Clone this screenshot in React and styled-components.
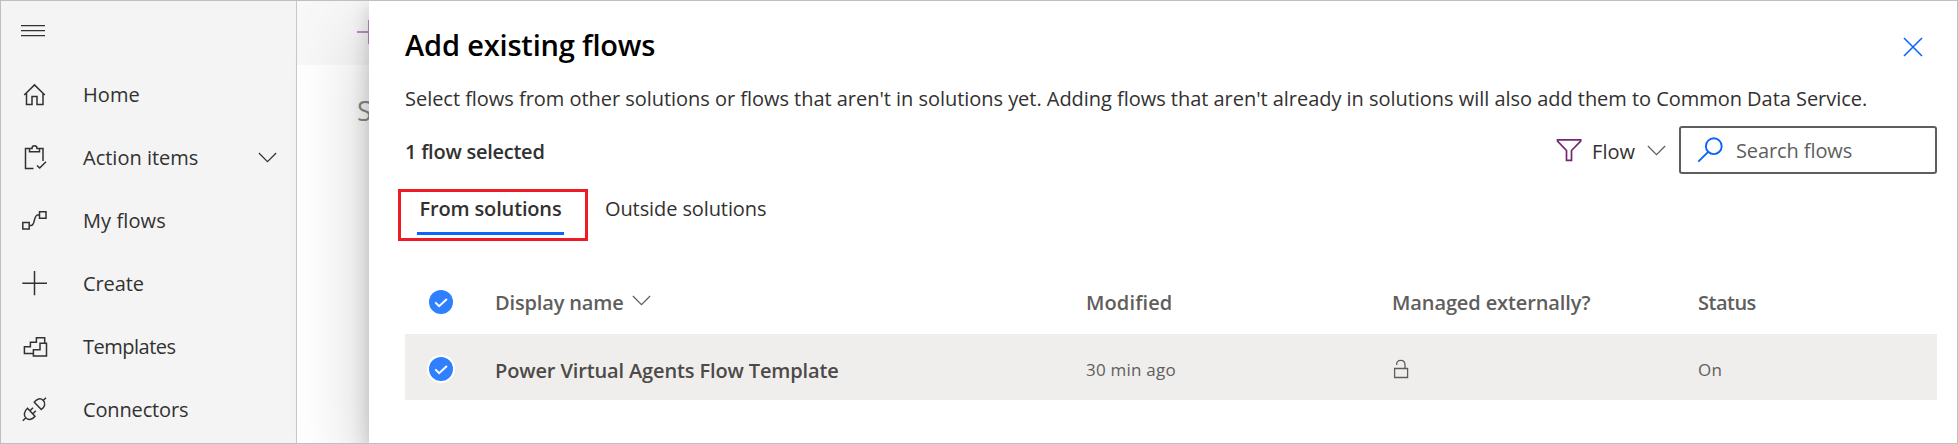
import React from 'react';
import styled, { createGlobalStyle, css } from 'styled-components';

const GlobalStyle = createGlobalStyle`
  * { box-sizing: border-box; }
  body {
    margin: 0;
    font: 400 20px/28px 'Open Sans', 'Noto Sans', sans-serif;
    color: #323130;
    background: #fff;
  }
  button, input { font: inherit; color: inherit; border: 0; background: none; padding: 0; }
`;

const Frame = styled.div`
  display: flex;
  width: 1958px;
  height: 444px;
  border: 1px solid #bfbfbf;
  overflow: hidden;
`;

/* Navigation */
const Nav = styled.nav`
  flex: none;
  width: 296px;
  border-right: 1px solid #c8c8c8;
  background: #f4f4f4;
`;
const MenuButton = styled.button`
  display: flex;
  align-items: center;
  width: 100%;
  height: 62px;
  padding: 0 0 2px 20px;
`;
const NavItem = styled.a`
  display: flex;
  align-items: center;
  height: 63px;
  padding: 0 19px 0 20px;
`;
const NavLabel = styled.span`
  flex: 1;
  margin-left: 35px;
  letter-spacing: ${(p) => p.$track || 0}px;
`;

/* Page behind the panel */
const Backdrop = styled.div`
  flex: none;
  width: 72px;
  overflow: hidden;
  background: #fff;
`;
const CommandBar = styled.div`
  height: 64px;
  padding: 19px 0 0 60px;
  background: #f8f8f8;
`;
const PageTitle = styled.div`
  padding: 27px 0 0 60px;
  font-size: 27px;
  line-height: 38px;
  color: #8a8a8a;
  white-space: nowrap;
`;

/* Panel */
const Panel = styled.section`
  position: relative;
  flex: 1;
  padding: 19px 20px 0 36px;
  background: #fff;
  box-shadow: 0 32px 72px rgba(0, 0, 0, 0.22), 0 6px 18px rgba(0, 0, 0, 0.18);
`;
const PanelHeader = styled.header`
  display: flex;
  align-items: center;
  justify-content: space-between;
  height: 51px;
  padding-right: 14px;
`;
const Title = styled.h1`
  margin: 0 0 2px;
  font-size: 29px;
  font-weight: 600;
  line-height: 40px;
  letter-spacing: -0.17px;
  color: #000;
`;
const CloseButton = styled.button`
  display: flex;
  padding-top: 3px;
`;
const Description = styled.p`
  margin: 14px 0 13px;
  letter-spacing: -0.035px;
  white-space: nowrap;
`;
const Toolbar = styled.div`
  display: flex;
  align-items: center;
  height: 48px;
`;
const Selected = styled.div`
  flex: 1;
  padding-top: 3px;
  font-weight: 600;
  letter-spacing: -0.25px;
`;
const FilterButton = styled.button`
  display: flex;
  align-items: center;
  margin-right: 13px;
`;
const FilterLabel = styled.span`
  margin: 3px 12px 0 10px;
`;
const SearchBox = styled.label`
  display: flex;
  align-items: center;
  width: 258px;
  height: 48px;
  padding-left: 16px;
  border: 2px solid #605e5c;
  border-radius: 3px;
`;
const SearchInput = styled.input`
  flex: 1;
  min-width: 0;
  margin-left: 13px;
  padding-top: 2px;
  outline: none;
  letter-spacing: -0.1px;
  &::placeholder { color: #605e5c; opacity: 1; }
`;

/* Tabs */
const Tabs = styled.div`
  display: flex;
  height: 52px;
  margin: 15px 0 27px -7px;
`;
const Highlight = styled.div`
  width: 190px;
  padding: 2px 0 0 16px;
  border: 3px solid #ed1c24;
`;
const Tab = styled.button`
  display: block;
  height: 41px;
  padding-bottom: 8px;
  ${(p) =>
    p.$active
      ? css`
          width: 147px;
          border-bottom: 3px solid #0b65fc;
          font-weight: 600;
          letter-spacing: -0.15px;
        `
      : css`
          margin: 3px 0 0 17px;
          letter-spacing: -0.1px;
        `}
`;

/* Table */
const Row = styled.div`
  display: grid;
  grid-template-columns: 90px 591px 306px 306px 1fr;
  align-items: center;
  height: 66px;
  background: ${(p) => (p.$selected ? '#f0eeec' : 'transparent')};
`;
const CheckCell = styled.div`
  display: flex;
  padding: ${(p) => (p.$selected ? '3px 0 0 22px' : '1px 0 0 22px')};
`;
const HeadCell = styled.div`
  display: flex;
  align-items: center;
  padding-top: 4px;
  font-weight: 600;
  letter-spacing: ${(p) => p.$track || 0}px;
  color: #605e5c;
`;
const SortIcon = styled.span`
  display: flex;
  margin: -6px 0 0 8px;
`;
const NameCell = styled.div`
  padding-top: 8px;
  font-weight: 600;
  letter-spacing: -0.13px;
  color: #4c4a48;
`;
const Cell = styled.div`
  display: flex;
  align-items: center;
  padding-top: 6px;
  font-size: 17px;
  letter-spacing: 0.22px;
  color: #605e5c;
`;
const LockIcon = styled.span`
  display: flex;
  margin: -3px 0 0 -1px;
`;

const Icon = ({ w = 27, h = 27, color = '#323130', sw = 1.5, children }) => (
  <svg width={w} height={h} viewBox={`0 0 ${w} ${h}`} fill="none" stroke={color} strokeWidth={sw}>
    {children}
  </svg>
);

const Chevron = ({ color }) => (
  <Icon w={19} h={11} sw={1.2} color={color}>
    <path d="M.9 1 9.500 9.600 18.100 1" />
  </Icon>
);

const Check = ({ ring }) => (
  <Icon w={28} h={28} sw={2} color="#fff">
    {ring && <circle cx="14" cy="14" r="14" fill="#fff" stroke="none" />}
    <circle cx="14" cy="14" r="12" fill="#2f80ff" stroke="none" />
    <path d="m8.3 14.4 3.8 3.8 7.8-7.2" />
  </Icon>
);

const NAV = [
  {
    label: 'Home',
    track: 0.1,
    icon: <path d="M3.2 14 13.5 3.9 23.8 14M5.5 12v11.5H11v-8h5v8h6V12" />,
  },
  {
    label: 'Action items',
    expandable: true,
    icon: (
      <path d="M12.5 24.5h-8v-20h4M18.5 4.5H22V17M8.5 4.5v3.2h10V4.5H16c0-3.6-5-3.6-5 0zM16 21.5l2.7 2.5 6.3-6.3" />
    ),
  },
  {
    label: 'My flows',
    track: 0.1,
    icon: (
      <path d="M18.5 4.8H25v6.4h-6.5zM1.8 15.5h6.4v6.4H1.8zM8.2 18.6H10c2.2 0 2.6-2 3.2-4.6S14.6 8 16.5 8h2" />
    ),
  },
  { label: 'Create', track: -0.1, icon: <path d="M1.3 13.2H26M13.5 1v24.3" /> },
  {
    label: 'Templates',
    track: -0.5,
    icon: <path d="M12.4 23v-6.3H19v-6.4h6.5V23zM12.4 20.5h-9v-6.8h6V9.2h6V4.7h8.3v5.6" />,
  },
  {
    label: 'Connectors',
    track: -0.15,
    icon: (
      <path d="m1.8 24.8 3-3M6.5 12.3l7.5 7.9c-2.3 3.2-6.3 4.3-9 1.8s-2-6.5 1.5-9.7zM9 14.8l3-3M11.8 17.7l3-3M13.3 6.200l7 7.300c3.500-2.500 4.700-6.300 2-9s-6.500-2-9 1.700zM22.200 4.500 25 1.700" />
    ),
  },
];

export default function App() {
  return (
    <>
      <GlobalStyle />
      <Frame>
        <Nav>
          <MenuButton aria-label="Menu">
            <Icon w={24} h={12} sw={1.2}>
              <path d="M0 .6h24M0 5.600h24M0 10.600h24" />
            </Icon>
          </MenuButton>
          {NAV.map((item) => (
            <NavItem key={item.label}>
              <Icon>{item.icon}</Icon>
              <NavLabel $track={item.track}>{item.label}</NavLabel>
              {item.expandable && <Chevron />}
            </NavItem>
          ))}
        </Nav>

        <Backdrop>
          <CommandBar>
            <Icon w={24} h={24} sw={2} color="#b88fc0">
              <path d="M0 12h24M12 0v24" />
            </Icon>
          </CommandBar>
          <PageTitle>S</PageTitle>
        </Backdrop>

        <Panel>
          <PanelHeader>
            <Title>Add existing flows</Title>
            <CloseButton aria-label="Close">
              <Icon w={20} h={20} sw={1.6} color="#0b65fc">
                <path d="m1 1 18 18M19 1 1 19" />
              </Icon>
            </CloseButton>
          </PanelHeader>
          <Description>
            Select flows from other solutions or flows that aren't in solutions yet. Adding flows that
            aren't already in solutions will also add them to Common Data Service.
          </Description>

          <Toolbar>
            <Selected>1 flow selected</Selected>
            <FilterButton>
              <Icon w={26} h={24} sw={1.7} color="#742774">
                <path d="M1.5 1.9h23.2v1.2L15.5 12.5v9.9h-5v-9.9L1.5 3.1z" />
              </Icon>
              <FilterLabel>Flow</FilterLabel>
              <Chevron color="#605e5c" />
            </FilterButton>
            <SearchBox>
              <Icon w={26} h={26} sw={1.9} color="#0b65fc">
                <circle cx="16.8" cy="9.2" r="7.9" />
                <path d="M11.2 14.8 1.3 24.7" />
              </Icon>
              <SearchInput placeholder="Search flows" />
            </SearchBox>
          </Toolbar>

          <Tabs>
            <Highlight>
              <Tab $active>From solutions</Tab>
            </Highlight>
            <Tab>Outside solutions</Tab>
          </Tabs>

          <Row>
            <CheckCell>
              <Check />
            </CheckCell>
            <HeadCell $track={-0.15}>
              Display name
              <SortIcon>
                <Chevron color="#605e5c" />
              </SortIcon>
            </HeadCell>
            <HeadCell $track={0.12}>Modified</HeadCell>
            <HeadCell $track={-0.11}>Managed externally?</HeadCell>
            <HeadCell $track={-0.5}>Status</HeadCell>
          </Row>
          <Row $selected>
            <CheckCell $selected>
              <Check ring />
            </CheckCell>
            <NameCell>Power Virtual Agents Flow Template</NameCell>
            <Cell>30 min ago</Cell>
            <Cell>
              <LockIcon>
                <Icon w={18} h={20} sw={1.3} color="#605e5c">
                  <path d="M3.6 9.5h13v9h-13zM5.6 6C5.300 3 7 1.400 9.700 1.400s4.300 1.600 4.300 4.500v3.600" />
                </Icon>
              </LockIcon>
            </Cell>
            <Cell>On</Cell>
          </Row>
        </Panel>
      </Frame>
    </>
  );
}
